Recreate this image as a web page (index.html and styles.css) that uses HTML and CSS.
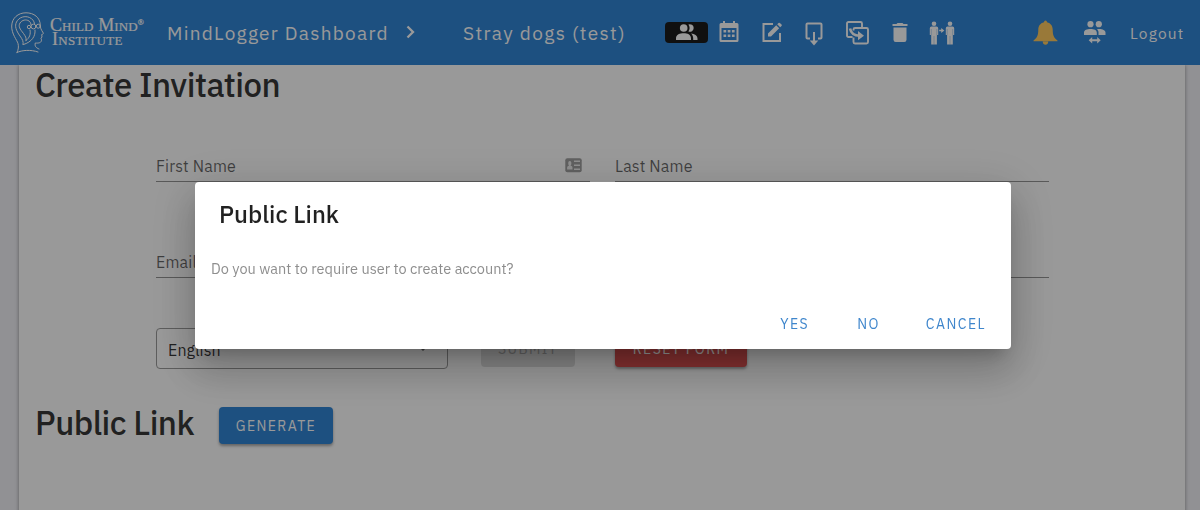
FILE: index.html
```html
<!DOCTYPE html>
<html lang="en">
<head>
<meta charset="utf-8">
<title>MindLogger Dashboard</title>
<link rel="stylesheet" href="styles.css">
</head>
<body>
<header class="bar">
  <div class="logo">
    <svg class="logo-mark" width="34" height="42" viewBox="0 0 34 42" fill="none" stroke="#fff" stroke-width="1" stroke-linecap="round" stroke-linejoin="round">
      <path d="M6 40.500c1.500-3 1.800-6 1-9C6 28 .5 22 .7 14 1 6 7 .8 15 .8c8 0 14 4.700 14.300 12.200 0 3 .7 4.500 3 8 .3.800-.5 1.300-1.600 1.500l.3 2.500-1 1.300.5 1.500c0 3-2.500 3.500-6.200 3.200-.8 3 .5 4.800 3.700 6M6 40.500c5-2.500 14-3 21-.5"/>
      <path d="M12 32.500c.7-3-.5-5-3-8.500C5 18.500 3.500 14 5.500 10 8 5 14 3.500 18.500 5.500c3 1.300 4.500 3.500 5 6M15 28.500c.5-3-.5-4-2.500-7C9 17 7 14.500 9 11c2-3 6-4 9-2 1.300 1 2 2.200 2 4M19 18c1 4-.5 8-4 10.500M24 18c.7 6-3 12-11.500 14.500"/>
      <circle cx="18" cy="15" r="1.700"/><circle cx="22.500" cy="14.500" r="2.400"/><circle cx="27.300" cy="14.200" r="2"/>
    </svg>
    <div class="logo-text"><span class="logo-one">Child Mind<sup>®</sup></span><span class="logo-two">Institute</span></div>
  </div>
  <span class="crumb">MindLogger Dashboard</span>
  <svg class="chev" width="10" height="14" viewBox="0 0 10 14" fill="none" stroke="#fff" stroke-width="2.300"><path d="M1.500 1.500 7 7l-5.500 5.500"/></svg>
  <span class="applet">Stray dogs (test)</span>
  <nav class="tools">
    <span class="chip"><svg width="22" height="17" viewBox="0 0 22 17" fill="#fff"><circle cx="7.700" cy="4" r="3.800"/><path d="M0 16v-1.500C0 10.500 4 9.300 7.700 9.300s7.300 1.200 7.300 5.200V16zM12.400.5a3.800 3.800 0 1 1 0 7c1.600-2 1.600-5 0-7zM15 9.600c3.500.5 6.500 2 6.500 4.900V16h-4.300v-1.500c0-2-.7-3.600-2.200-4.900z"/></svg></span>
    <svg class="i-cal" width="20" height="21" viewBox="0 0 20 21"><path fill="#fff" fill-rule="evenodd" d="M4 0h2v2h8V0h2v2h2q1.500 0 1.500 1.500v16q0 1.500-1.500 1.500H2Q.5 21 .5 19.500v-16Q.5 2 2 2h2zM2.500 7v12h15V7zM4.500 9h2.700v2.500H4.500zm4.200 0h2.700v2.500H8.700zm4.200 0h2.700v2.500h-2.700zm-8.400 4.500h2.700V16H4.500zm4.200 0h2.700V16H8.700zm4.200 0h2.700V16h-2.700z"/></svg>
    <svg class="i-edit" width="20" height="21" viewBox="0 0 20 21"><path fill="none" stroke="#fff" stroke-width="2" d="M11 2H1.500v17h16.500V11"/><path fill="#fff" d="m6 11.500 8.200-8.200 3 3L9 14.500H6zm9.200-9.200 1.300-1.300q.7-.7 1.400 0l1.600 1.500q.7.700 0 1.400l-1.300 1.300z"/></svg>
    <svg class="i-down" width="18" height="24" viewBox="0 0 18 24" fill="none" stroke="#fff" stroke-width="2"><path d="M5 16.500H2.500q-1 0-1-1v-13q0-1 1-1h13q1 0 1 1v13q0 1-1 1H13M9 10v10"/><path fill="#fff" stroke="none" d="M4.700 18.500h8.600L9 23.500z"/></svg>
    <svg class="i-copy" width="23" height="24" viewBox="0 0 23 24" fill="none" stroke="#fff" stroke-width="1.900"><path d="M6.500 16H2.500Q1 16 1 14.500v-12Q1 1 2.500 1h12Q16 1 16 2.500V7M7.500 9.500v-1Q7.500 7 9 7h11.500Q22 7 22 8.500v12.500q0 1.500-1.500 1.500H9q-1.500 0-1.500-1.500V16.500"/><path stroke-width="2.600" d="M4 7.500c1 4.500 4 7.200 9.500 7.200"/><path fill="#fff" stroke="none" d="M12 10 18 14.700 12 19.300z"/></svg>
    <svg class="i-trash" width="16" height="19" viewBox="0 0 16 19" fill="#fff"><path d="M.5 1H4.500L5.500 0h5l1 1h4v2H.5zM1.500 4.500h13v12.300q0 2.200-2.200 2.200H3.700q-2.200 0-2.200-2.200z"/></svg>
    <svg class="i-pair" width="26" height="24" viewBox="0 0 26 24" fill="#fff"><circle cx="5" cy="2.800" r="2.300"/><path d="M2.500 5.500h5q1.700 0 1.700 1.700V14H7.900v9.500H2.200V14H.8V7.200q0-1.700 1.700-1.700z"/><circle cx="21" cy="2.800" r="2.300"/><path d="M18.500 5.500h5q1.700 0 1.700 1.700V14h-1.400v9.500h-5.700V14h-1.300V7.200q0-1.700 1.700-1.700zM10.200 8.800h2V7l3.200 2.600-3.200 2.500v-1.800h-2z"/><path stroke="#3185d6" stroke-width=".3" d="M5 15v8.500M21 15v8.500M2.300 8v6M7.800 8v6M18.200 8v6M23.700 8v6"/></svg>
    <svg class="i-bell" width="25" height="26" viewBox="0 0 25 26" fill="#ffca5f"><path d="M11 2.200Q11 .5 12.500.5T14 2.200c4 1 5.700 4 5.700 7.300 0 6 1.300 8.500 4.800 11v.8H.5v-.8c3.500-2.500 4.800-5 4.800-11 0-3.300 1.700-6.300 5.700-7.300zM9.700 21.500h5.600q-.3 3.300-2.800 3.300t-2.800-3.300z"/></svg>
    <svg class="i-group" width="22" height="23" viewBox="0 0 22 23" fill="#fff"><circle cx="6.500" cy="3.200" r="3.100"/><circle cx="14.800" cy="3.200" r="3.100"/><path d="M0 14v-2.500C0 9 3 8 6.500 8s6.300 1 6.300 3.500V14zM13 8.200c4-.7 8.500.5 8.500 3.300V14h-7v-2.500c0-1.400-.5-2.500-1.500-3.300zM4.700 19.300l3.500-3.300v2.300h5V16l3.500 3.300-3.500 3.300v-2.300h-5v2.300z"/></svg>
    <span class="logout">Logout</span>
  </nav>
</header>

<main class="card">
  <h1 class="title">Create Invitation</h1>
  <form class="form">
    <div class="row">
      <div class="field"><span class="label">First Name</span>
        <svg class="contact" width="17" height="15" viewBox="0 0 17 15"><rect x=".3" y=".3" width="16.400" height="14" rx="2" fill="#a0a0a0"/><path fill="#eee" d="M4.800 3q1.600 0 1.600 2T5.500 7.500Q7.500 8 7.500 9.500V11.500h-5.400V9.500Q2.100 8 4.100 7.500 3.200 7 3.200 5T4.800 3zM9 2.500h6V4H9zm0 4h6V8H9zm0 4h6V12H9z"/></svg>
      </div>
      <div class="field"><span class="label">Last Name</span></div>
    </div>
    <div class="row">
      <div class="field"><span class="label">Email</span></div>
      <div class="field"></div>
    </div>
    <div class="actions">
      <div class="select"><span>English</span><i class="caret"></i></div>
      <span class="btn submit">SUBMIT</span>
      <span class="btn reset">RESET FORM</span>
    </div>
  </form>
  <section class="public">
    <h2 class="title public-title">Public Link</h2>
    <span class="btn generate">GENERATE</span>
  </section>
</main>

<div class="overlay">
  <div class="dialog" role="dialog">
    <h3 class="dialog-title">Public Link</h3>
    <p class="dialog-text">Do you want to require user to create account?</p>
    <div class="dialog-actions"><span class="yes">YES</span><span class="no">NO</span><span class="cancel">CANCEL</span></div>
  </div>
</div>
</body>
</html>
```

FILE: styles.css
```css
* { box-sizing: border-box; }
body {
  margin: 0;
  height: 510px;
  overflow: hidden;
  background: #f2f2f7;
  color: rgba(0, 0, 0, .8);
  font-family: "IBM Plex Sans", Roboto, sans-serif;
  white-space: nowrap;
}
svg { display: block; flex: none; }
.bar {
  position: relative;
  z-index: 1;
  display: flex;
  align-items: flex-start;
  height: 65px;
  padding-left: 11px;
  background: #3185d6;
  color: #fff;
}
.logo { display: flex; width: 156px; padding-top: 12px; }
.logo-text {
  display: flex;
  flex-direction: column;
  padding: 6px 0 0 5px;
  font: 18px/14px "Liberation Serif", serif;
  font-variant: small-caps;
  -webkit-text-stroke: .2px #fff;
}
.logo-one { letter-spacing: .1px; }
.logo-two { padding-left: 2px; letter-spacing: .3px; }
.logo sup { font-size: 8px; line-height: 0; vertical-align: 6px; }
.crumb, .applet { padding-top: 21px; font-size: 19px; line-height: 24px; letter-spacing: 1.270px; }
.crumb { width: 239px; }
.chev { margin-top: 25px; }
.applet { margin-left: 47px; width: 202px; letter-spacing: 1.370px; }
.tools { display: flex; align-items: flex-start; }
.chip {
  display: flex;
  justify-content: center;
  width: 43px;
  height: 21px;
  margin-top: 22px;
  padding-top: 2px;
  border-radius: 4px;
  background: #1c1c1c;
}
.i-cal { margin: 21px 0 0 11px; }
.i-edit { margin: 22px 0 0 23px; }
.i-down { margin: 22px 0 0 23px; }
.i-copy { margin: 21px 0 0 23px; }
.i-trash { margin: 23px 0 0 23px; }
.i-pair { margin: 21px 0 0 21px; }
.i-bell { margin: 20px 0 0 78px; }
.i-group { margin: 21px 0 0 26px; }
.logout { padding-top: 23px; margin-left: 24px; font-size: 15.500px; line-height: 20px; letter-spacing: 1.200px; }

.card {
  width: 1166px;
  height: 460px;
  margin-left: 19px;
  background: #fff;
  box-shadow: 0 0 4px rgba(0, 0, 0, .4);
}
.title { margin: 0; padding-left: 16px; font-size: 33px; line-height: 40px; font-weight: 500; letter-spacing: -.550px; }
.form { padding-left: 137px; }
.row { display: flex; gap: 25px; padding-top: 46px; }
.row + .row { padding-top: 65px; }
.field {
  display: flex;
  justify-content: space-between;
  width: 434px;
  height: 31px;
  border-bottom: 1px solid #949494;
  color: rgba(0, 0, 0, .6);
}
.label { font-size: 16px; line-height: 31px; letter-spacing: .15px; }
.contact { margin: 7px 8px 0 0; }
.actions { display: flex; align-items: flex-start; height: 42px; margin-top: 50px; }
.select {
  display: flex;
  align-items: center;
  justify-content: space-between;
  width: 292px;
  height: 41px;
  padding: 3px 19px 0 11px;
  border: 1px solid #9b9b9b;
  border-radius: 4px;
  font-size: 16px;
  letter-spacing: .1px;
}
.caret { border: 5px solid transparent; border-top-color: #666; border-bottom: 0; margin-bottom: 4px; }
.btn {
  display: flex;
  align-items: center;
  justify-content: center;
  height: 37px;
  border-radius: 4px;
  font-size: 14px;
  letter-spacing: 1.400px;
}
.submit { width: 94px; margin: 2px 0 0 33px; background: #e0e0e0; color: #a6a6a6; }
.reset { width: 132px; margin: 2px 0 0 40px; background: #db4f4f; color: #fff; box-shadow: 0 2px 3px rgba(0, 0, 0, .35); }
.public { display: flex; padding-top: 33px; }
.public-title { width: 200px; }
.generate { width: 114px; margin-top: 4px; background: #3185d6; color: #fff; box-shadow: 0 2px 3px rgba(0, 0, 0, .35); }

.overlay {
  position: fixed;
  inset: 0;
  z-index: 2;
  padding: 182px 0 0 195px;
  background: rgba(0, 0, 0, .4);
}
.dialog {
  width: 816px;
  height: 167px;
  border-radius: 4px;
  background: #fff;
  box-shadow: 0 11px 15px -7px rgba(0, 0, 0, .2), 0 24px 38px 3px rgba(0, 0, 0, .14), 0 9px 46px 8px rgba(0, 0, 0, .12);
}
.dialog-title { margin: 0; padding: 16px 24px 0; font-size: 24px; line-height: 32px; font-weight: 500; color: rgba(0, 0, 0, .87); }
.dialog-text { margin: 0; padding: 28px 16px 0; font-size: 14.500px; line-height: 22px; color: #8e8e8e; }
.dialog-actions { display: flex; justify-content: flex-end; padding: 34px 25px 0; font-size: 14px; line-height: 20px; letter-spacing: 1.450px; color: #3f86cc; }
.no { margin-left: 48px; }
.cancel { margin-left: 46px; }
```
